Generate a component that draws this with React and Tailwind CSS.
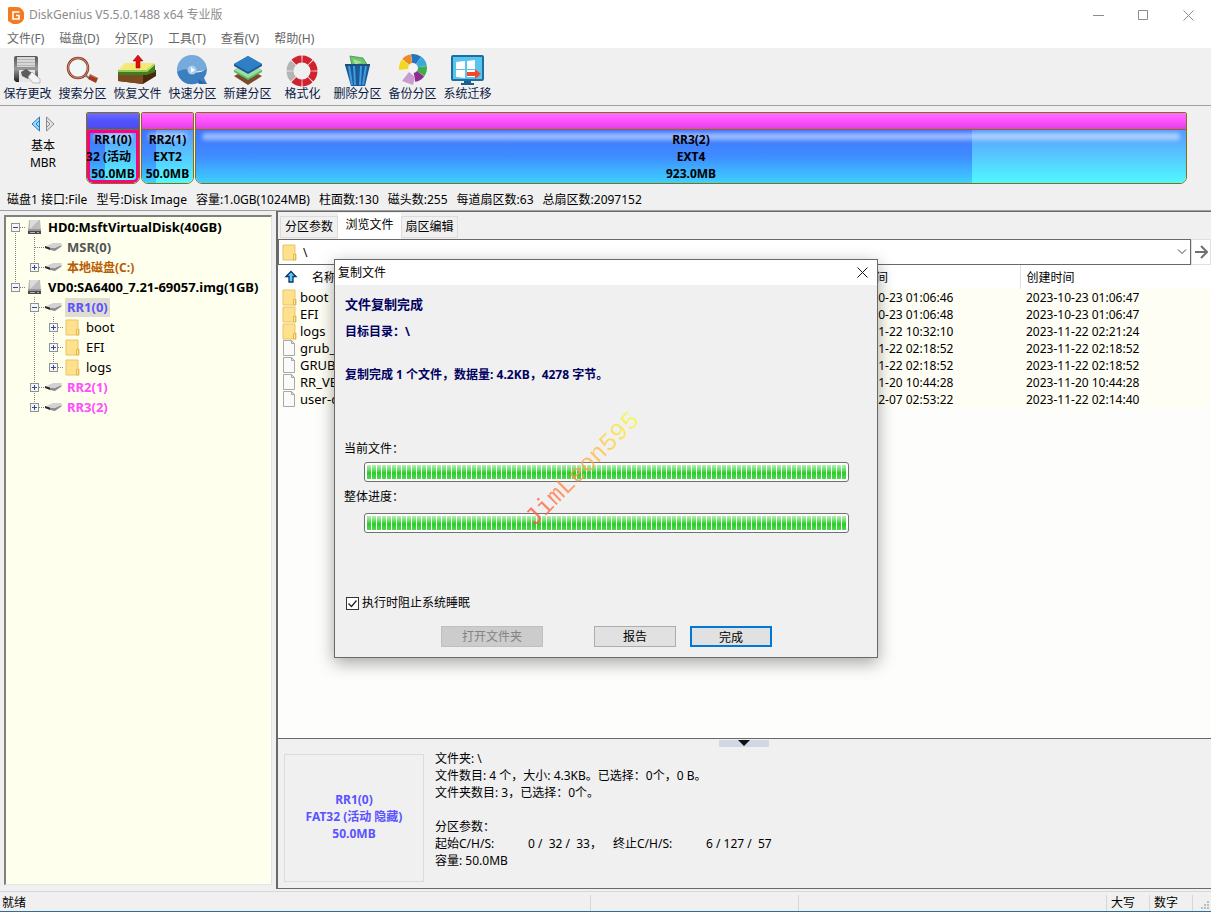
const MENUS = ['文件(F)', '磁盘(D)', '分区(P)', '工具(T)', '查看(V)', '帮助(H)'];

const DISK_INFO = [
  '磁盘1 接口:File',
  '型号:Disk Image',
  '容量:1.0GB(1024MB)',
  '柱面数:130',
  '磁头数:255',
  '每道扇区数:63',
  '总扇区数:2097152',
];

// guides: one entry per indent column. u/d = line above/below, +/- = expander,
// s = stub to the right.
const TREE = [
  { guides: ['-d'], icon: 'disk', label: 'HD0:MsftVirtualDisk(40GB)', cls: 'font-bold text-black' },
  { guides: ['ud', 'uds'], icon: 'part', label: 'MSR(0)', cls: 'font-bold text-[#555555]' },
  { guides: ['ud', '+u'], icon: 'part', label: '本地磁盘(C:)', cls: 'font-bold text-[#b85c00] text-[12px]' },
  { guides: ['-u'], icon: 'disk', label: 'VD0:SA6400_7.21-69057.img(1GB)', cls: 'font-bold text-black' },
  { guides: ['', '-ud'], icon: 'part', label: 'RR1(0)', cls: 'font-bold text-[#5a54ff]', selected: true },
  { guides: ['', 'ud', '+ud'], icon: 'folder', label: 'boot', cls: 'text-black' },
  { guides: ['', 'ud', '+ud'], icon: 'folder', label: 'EFI', cls: 'text-black' },
  { guides: ['', 'ud', '+u'], icon: 'folder', label: 'logs', cls: 'text-black' },
  { guides: ['', '+ud'], icon: 'part', label: 'RR2(1)', cls: 'font-bold text-[#ff4dff]' },
  { guides: ['', '+u'], icon: 'part', label: 'RR3(2)', cls: 'font-bold text-[#ff4dff]' },
];

const FILES = [
  { name: 'boot', dir: true, modified: '2023-10-23 01:06:46', created: '2023-10-23 01:06:47' },
  { name: 'EFI', dir: true, modified: '2023-10-23 01:06:48', created: '2023-10-23 01:06:47' },
  { name: 'logs', dir: true, modified: '2023-11-22 10:32:10', created: '2023-11-22 02:21:24' },
  { name: 'grub_c', modified: '2023-11-22 02:18:52', created: '2023-11-22 02:18:52' },
  { name: 'GRUB', modified: '2023-11-22 02:18:52', created: '2023-11-22 02:18:52' },
  { name: 'RR_VE', modified: '2023-11-20 10:44:28', created: '2023-11-20 10:44:28' },
  { name: 'user-c', modified: '2023-12-07 02:53:22', created: '2023-11-22 02:14:40' },
];

function FolderIcon() {
  return (
    <svg width="15" height="17" viewBox="0 0 15 17" className="flex-none">
      <path d="M1 1h12v9h1v6H1z" fill="#ffe08c" stroke="#e8c566" />
      <path d="M11.5 16V10.5h2V16z" fill="#ffe9ad" stroke="#e0b94e" />
    </svg>
  );
}

function FileIcon() {
  return (
    <svg width="15" height="17" viewBox="0 0 15 17" className="flex-none">
      <path d="M1.5.5h8l3 3v12h-11z" fill="#fafafa" stroke="#a8a8a8" />
      <path d="M9.500.5v3h3z" fill="#e4e4e4" stroke="#a8a8a8" />
    </svg>
  );
}

function DiskIcon() {
  return (
    <svg width="15" height="16" viewBox="0 0 15 16">
      <path d="M2 1h11l1 10H1z" fill="#bdbdbd" />
      <path d="M3 1h9l-9 9z" fill="#dcdcdc" />
      <path d="M1 10h13v2H1z" fill="#9a9a9a" />
      <path d="M1 12h13v3H1z" fill="#4a4a4a" />
      <path d="M3 13.500h5M10 13.500h2" stroke="#b5b5b5" />
    </svg>
  );
}

function PartIcon() {
  return (
    <svg width="17" height="10" viewBox="0 0 17 10">
      <path d="M6 7l10.500-4v1.500L10 9z" fill="#8e8e8e" />
      <path d="M1 4 8 1h8.500v2L9 6.500z" fill="#d2d2d2" />
      <path d="M0 4l5 1.500V8L0 6z" fill="#2c2c2c" />
      <path d="M5 5.500l5 1V9L5 8z" fill="#8c8c8c" />
    </svg>
  );
}

const TREE_ICONS = { disk: <DiskIcon />, part: <PartIcon />, folder: <FolderIcon /> };

function Guide({ spec }) {
  const box = spec[0] === '+' || spec[0] === '-' ? spec[0] : null;
  return (
    <svg width="19" height="20" viewBox="0 0 19 20" className="flex-none" shapeRendering="crispEdges">
      <g stroke="#808080" strokeDasharray="1 1">
        {spec.includes('u') && <path d="M9.500 0v10" />}
        {spec.includes('d') && <path d="M9.500 10v10" />}
        {(box || spec.includes('s')) && <path d="M9.500 10.500H19" />}
      </g>
      {box && (
        <>
          <rect x="5.500" y="6.500" width="8" height="8" fill="#f6f6f6" stroke="#919191" />
          <path d="M7 10.500h5" stroke="#2b4ba0" />
          {box === '+' && <path d="M9.500 8v5" stroke="#2b4ba0" />}
        </>
      )}
    </svg>
  );
}

function wedge(cx, cy, r0, r1, a0, a1) {
  const p = (r, a) => {
    const t = (a * Math.PI) / 180;
    return `${(cx + r * Math.sin(t)).toFixed(2)} ${(cy - r * Math.cos(t)).toFixed(2)}`;
  };
  return `M${p(r0, a0)}L${p(r1, a0)}A${r1} ${r1} 0 0 1 ${p(r1, a1)}L${p(r0, a1)}A${r0} ${r0} 0 0 0 ${p(r0, a0)}`;
}

const SaveIcon = (
  <>
    <defs>
      <linearGradient id="save" x1="0" y1="0" x2="0" y2="1">
        <stop offset="0" stopColor="#555" />
        <stop offset=".5" stopColor="#9a9a9a" />
        <stop offset="1" stopColor="#222" />
      </linearGradient>
    </defs>
    <path d="M2 4q0-2 2-2h20q2 0 2 2v24H4l-2-2z" fill="url(#save)" />
    <path d="M5 3h18v10H5z" fill="#d8d8d8" />
    <path d="M5 5h18v1H5zM5 8h18v1H5zM5 11h18v1H5z" fill="#b4b4b4" />
    <path d="M7 16h16v12H7z" fill="#e6e6e6" />
    <path d="M9 18l5-3 6 4-4 6-6-3z" fill="#5c5c5c" />
    <path d="M16 23l4-5 8 7v4h-7z" fill="#f4f4f4" stroke="#999" strokeWidth=".6" />
  </>
);

const SearchIcon = (
  <>
    <circle cx="11" cy="14" r="10" fill="#f3f6f6" stroke="#8e3b22" strokeWidth="2.500" />
    <circle cx="11" cy="14" r="10" fill="none" stroke="#e0a088" strokeWidth=".8" />
    <path d="M18 21l4 3" stroke="#777" strokeWidth="2" />
    <path d="M23 20l8 4-2 5-8-4z" fill="#a03c22" />
    <path d="M23 21l7 3" stroke="#d9795c" />
  </>
);

const RecoverIcon = (
  <g transform="translate(-4)">
    <path d="M0 16h38v6l-13 8L0 27z" fill="#4a280c" />
    <path d="M0 17l25 4v9L0 27z" fill="#7a4a20" />
    <path d="M7 10h30v8l-8 3H0v-4z" fill="#3f7d1d" />
    <path d="M7 9h30l-8 7H0z" fill="#f3e978" />
    <path d="M0 17h29l8-7" fill="none" stroke="#b7e070" strokeWidth="1.500" />
    <path d="M20 1l5 6h-3v7h-4V7h-3z" fill="#e01010" stroke="#900" strokeWidth=".5" />
  </g>
);

const QuickIcon = (
  <>
    <path d="M15 1a15 15 0 0 1 15 15l-15 2L0 18A15 15 0 0 1 15 1z" fill="#75aadb" />
    <path d="M0 18q8-5 14-1t16-2a15 15 0 0 1-3 9l3 6h-8l-1-1A15 15 0 0 1 0 18z" fill="#3b7fc0" />
    <circle cx="15" cy="16" r="4.500" fill="#a9cdec" />
    <path d="M14 13l4 3-4 3z" fill="#fff" />
    <path d="M21 25l9 5h-8z" fill="#2a6aab" />
  </>
);

const NewIcon = (
  <>
    <path d="M2 22l14-7 14 7-14 9z" fill="#7a4a2a" />
    <path d="M2 16l14-7 14 7v2l-14 8-14-8z" fill="#5fb570" />
    <path d="M2 16l14-7 14 7-14 8z" fill="#9be0a0" />
    <path d="M2 10l14-8 14 8v2l-14 8-14-8z" fill="#1c5590" />
    <path d="M2 10l14-8 14 8-14 8z" fill="#2f7fc6" />
  </>
);

const FormatIcon = (
  <>
    {Array.from({ length: 8 }, (_, i) => (
      <path
        key={i}
        d={wedge(15, 17, 8.5, 15.5, i * 45 + 2, i * 45 + 43)}
        fill={i === 5 || i === 6 ? '#b4b4b4' : '#d1222f'}
      />
    ))}
  </>
);

const DeleteIcon = (
  <>
    <path d="M8 2l13 2 5 8H10z" fill="#6cc46c" stroke="#2f8a3c" strokeWidth=".7" />
    <path d="M11 5l9 3-7 3z" fill="#a5e09c" />
    <path d="M3 11h25l-5 21H9z" fill="#1b5a96" />
    <path d="M7 12l3 19M12 12l1 19M19 12l-1 19M24 12l-3 19" stroke="#3f9ce0" strokeWidth="2" />
    <path d="M3 11h25" stroke="#1d4e80" strokeWidth="2" />
  </>
);

const BackupIcon = (
  <>
    {['#2474c0', '#3aa8dc', '#3fae49', '#8e2d92'].map((c, i) => (
      <path key={c} d={wedge(16, 14, 5, 14, i * 45 - 8, i * 45 + 36)} fill={c} />
    ))}
    <path d={wedge(16, 14, 5, 14, 310, 350)} fill="#ee8a22" />
    <path d={wedge(16, 14, 5, 14, 262, 308)} fill="#f4d820" />
    <path d="M12 18l6 5-2 8-11-4z" fill="#c99bcf" />
    <circle cx="16" cy="14" r="4" fill="#f4f4f4" />
  </>
);

const MigrateIcon = (
  <>
    <rect x="-1" y="1" width="33" height="26" rx="2" fill="#1d6f9f" />
    <rect x="1" y="3" width="29" height="22" fill="#58c5ee" />
    <path d="M4 8l9-1v8H4zM15 7l8-1v9h-8zM4 16h9v8l-9-1zM15 16h8v7h-8z" fill="#fff" />
    <path d="M15 18h8v-3l6 5-6 5v-3h-8z" fill="#f0492c" />
    <path d="M12 27h7v2h3v2H9v-2h3z" fill="#1d5f8c" />
  </>
);

const TOOLS = [
  ['保存更改', SaveIcon],
  ['搜索分区', SearchIcon],
  ['恢复文件', RecoverIcon],
  ['快速分区', QuickIcon],
  ['新建分区', NewIcon],
  ['格式化', FormatIcon],
  ['删除分区', DeleteIcon],
  ['备份分区', BackupIcon],
  ['系统迁移', MigrateIcon],
];

function TitleBar() {
  return (
    <header className="flex h-[30px] flex-none items-center bg-white pl-2 text-[#8c8c8c]">
      <svg width="16" height="17" viewBox="0 0 16 17">
        <path d="M1 0h8a7 8 0 0 1 0 17H5L0 14V1z" fill="#f47b20" />
        <path d="M11.500 5H5v7h6V8.500H8" fill="none" stroke="#fff" strokeWidth="1.600" />
      </svg>
      <span className="ml-[5px] flex-1">DiskGenius V5.5.0.1488 x64 专业版</span>
      <button aria-label="最小化" className="flex h-full w-[45px] items-center justify-center">
        <svg width="11" height="11" stroke="#8c8c8c" fill="none"><path d="M0 5.500h11" /></svg>
      </button>
      <button aria-label="最大化" className="flex h-full w-[45px] items-center justify-center">
        <svg width="11" height="11" stroke="#8c8c8c" fill="none"><path d="M.5.5h9v9h-9z" /></svg>
      </button>
      <button aria-label="关闭" className="flex h-full w-[45px] items-center justify-center">
        <svg width="11" height="11" stroke="#8c8c8c" fill="none"><path d="M.5.5l10 10M10.500.5l-10 10" /></svg>
      </button>
    </header>
  );
}

function Partition({ top, used, cls, selected, lines }) {
  return (
    <div className={`flex flex-col overflow-hidden rounded-t-[2px] rounded-b-[7px] border border-[#857010] ${cls}`}>
      <div className={`h-[17px] flex-none border-b border-[#857010] bg-linear-to-b ${top}`} />
      <div className="relative flex flex-1 flex-col overflow-hidden bg-linear-to-b from-[#5a98ff] to-[#50f8ff] text-center text-[12px] leading-[17px] font-bold text-black">
        <div
          className="absolute inset-y-0 left-0 bg-linear-to-b from-[#3f74ff] via-[#3f8cff] to-[#3fd0ff]"
          style={{ width: used }}
        />
        <div className="absolute inset-x-1.5 top-[3px] h-[7px] rounded-full bg-white/50 blur-[2px]" />
        {selected && <div className="absolute inset-0 rounded-b-[6px] border-[3px] border-[#ff0080]" />}
        <div className="relative flex flex-col items-center pt-px">
          {lines.map((l) => (
            <span key={l} className={l.startsWith('FAT32') ? 'mr-2 self-end whitespace-nowrap' : 'whitespace-nowrap'}>
              {l}
            </span>
          ))}
        </div>
      </div>
    </div>
  );
}

function DiskMap() {
  return (
    <section className="flex h-[83px] flex-none pt-1.5 pr-6">
      <div className="flex w-[86px] flex-none flex-col items-center pt-1 leading-[17px]">
        <div className="mb-[5px] flex gap-1">
          <button aria-label="上一磁盘">
            <svg width="10" height="16" viewBox="0 0 10 16"><path d="M8.500 1v14L1 8z" fill="#9adcff" stroke="#2a78b8" /><path d="M8 5L5 8l3 3" fill="none" stroke="#2a78b8" /></svg>
          </button>
          <button aria-label="下一磁盘">
            <svg width="10" height="16" viewBox="0 0 10 16"><path d="M1.500 1v14L9 8z" fill="#e4e4e4" stroke="#8a8a8a" /><path d="M2 5l3 3-3 3" fill="none" stroke="#8a8a8a" /></svg>
          </button>
        </div>
        <span>基本</span>
        <span>MBR</span>
      </div>
      <div className="flex h-[72px] flex-1 gap-px">
        <Partition
          cls="w-[54px] flex-none"
          top="from-[#6c6cff] via-[#5252ff] to-[#4c4ce8]"
          used="34%"
          selected
          lines={['RR1(0)', 'FAT32 (活动', '50.0MB']}
        />
        <Partition
          cls="w-[53px] flex-none"
          top="from-[#ff6cff] via-[#ff50ff] to-[#e040e0]"
          used="28%"
          lines={['RR2(1)', 'EXT2', '50.0MB']}
        />
        <Partition
          cls="flex-1"
          top="from-[#ff6cff] via-[#ff50ff] to-[#e040e0]"
          used="78.4%"
          lines={['RR3(2)', 'EXT4', '923.0MB']}
        />
      </div>
    </section>
  );
}

function DiskTree() {
  return (
    <aside className="m-1 w-[268px] flex-none border border-t-2 border-l-2 border-[#e3e3e3] border-t-[#808080] border-l-[#808080] bg-[#ffffee]">
      <ul>
        {TREE.map((n) => (
          <li key={n.label} className="flex h-5 items-center text-[13px]">
            {n.guides.map((g, i) => <Guide key={i} spec={g} />)}
            <span className="flex w-[19px] flex-none justify-center">{TREE_ICONS[n.icon]}</span>
            <span className={`ml-0.5 px-0.5 leading-[19px] ${n.cls} ${n.selected ? 'bg-[#e0dccf]' : ''}`}>{n.label}</span>
          </li>
        ))}
      </ul>
    </aside>
  );
}

function FileTable() {
  return (
    <div className="min-h-0 flex-1 bg-[#fdfdfb]">
      <table className="w-full table-fixed border-collapse text-left leading-[17px]">
        <colgroup>
          <col className="w-[556px]" />
          <col className="w-[186px]" />
          <col />
        </colgroup>
        <thead>
          <tr className="h-6 bg-white">
            <th className="font-normal">
              <span className="flex items-center gap-3.5 pl-1.5">
                <svg width="14" height="14" viewBox="0 0 14 14">
                  <path d="M7 1.500l5 5H9V12H5V6.500H2z" fill="#59c8ff" stroke="#0a3560" strokeWidth="1.300" />
                </svg>
                名称
              </span>
            </th>
            <th className="border-r border-[#e0e0e0] pl-1.5 font-normal">修改时间</th>
            <th className="pl-1.5 font-normal">创建时间</th>
          </tr>
        </thead>
        <tbody className="bg-[#fffef5]">
          {FILES.map((f) => (
            <tr key={f.name} className="h-[17px]">
              <td className="p-0">
                <span className="flex h-[17px] items-center gap-[3px] pl-1 text-[13px]">
                  {f.dir ? <FolderIcon /> : <FileIcon />}
                  {f.name}
                </span>
              </td>
              <td className="py-0 pl-1.5">{f.modified}</td>
              <td className="py-0 pl-1.5">{f.created}</td>
            </tr>
          ))}
        </tbody>
      </table>
    </div>
  );
}

function DetailPane() {
  return (
    <div className="flex h-[151px] flex-none border-y border-[#696969] pl-1.5">
      <div className="mt-[15px] mb-1.5 flex w-[140px] flex-none flex-col items-center justify-center border border-[#dcdcdc] pb-1 leading-[17px] font-bold text-[#5a54ff]">
        <span>RR1(0)</span>
        <span>FAT32 (活动 隐藏)</span>
        <span>50.0MB</span>
      </div>
      <div className="mt-[11px] ml-[11px] leading-[17px] whitespace-pre">
        <p>文件夹: \</p>
        <p>文件数目: 4 个，大小: 4.3KB。已选择：0个，0 B。</p>
        <p>文件夹数目: 3，已选择：0个。</p>
        <p> </p>
        <p>分区参数：</p>
        <p className="flex">
          <span className="w-[93px]">起始C/H/S:</span>
          <span className="w-[85px]">0 /  32 /  33，</span>
          <span className="w-[93px]">终止C/H/S:</span>
          <span>6 / 127 /  57</span>
        </p>
        <p>容量: 50.0MB</p>
      </div>
    </div>
  );
}

function Browser() {
  return (
    <main className="flex min-w-0 flex-1 flex-col border-t border-l-2 border-[#696969]">
      <div role="tablist" className="flex h-[27px] flex-none items-end pl-0.5">
        <button role="tab" className="mb-px h-[22px] w-[58px] border border-[#dcdcdc]">分区参数</button>
        <button role="tab" aria-selected="true" className="h-[26px] w-[63px] bg-white pb-0.5">浏览文件</button>
        <button role="tab" className="mb-px h-[22px] w-[57px] border border-[#dcdcdc]">扇区编辑</button>
      </div>
      <div className="flex h-[26px] flex-none bg-white">
        <div className="flex flex-1 items-center border border-[#696969] pl-[3px]">
          <FolderIcon />
          <input aria-label="路径" defaultValue="\" className="ml-1.5 h-5 flex-1 outline-none" />
          <button aria-label="展开路径" className="flex w-4 justify-center">
            <svg width="10" height="6" fill="none" stroke="#444"><path d="M1 .5l4 4 4-4" /></svg>
          </button>
        </div>
        <button aria-label="转到" className="flex w-5 items-center justify-center border border-[#e0e0e0]">
          <svg width="14" height="14" fill="none" stroke="#707070" strokeWidth="2"><path d="M1 7h11M7 1l6 6-6 6" /></svg>
        </button>
      </div>
      <FileTable />
      <div className="relative">
        <DetailPane />
        <button aria-label="折叠" className="absolute top-0.5 left-[441px] flex h-[7px] w-[50px] justify-center bg-[#cfd8e3]">
          <svg width="12" height="6"><path d="M0 0h12L6 6z" fill="#111" /></svg>
        </button>
      </div>
    </main>
  );
}

function Progress({ label }) {
  return (
    <div
      role="progressbar"
      aria-label={label}
      aria-valuenow={100}
      className="mr-7 ml-[29px] h-5 rounded-[3px] border border-[#707070] bg-white p-0.5"
    >
      <div className="h-full bg-linear-to-b from-[#b4efb4] via-[#22cf22] via-55% to-[#4fd84f]">
        <div className="h-full bg-[repeating-linear-gradient(to_right,transparent_0_4px,white_4px_5px)]" />
      </div>
    </div>
  );
}

function CopyDialog() {
  return (
    <div
      role="dialog"
      aria-label="复制文件"
      className="absolute top-[259px] left-[334px] w-[544px] border border-[#696969] bg-[#f0f0f0] shadow-[0_5px_16px_rgba(0,0,0,0.35)]"
    >
      <div className="flex h-[25px] items-center bg-white pl-[3px]">
        <span className="flex-1">复制文件</span>
        <button aria-label="关闭对话框" className="flex w-[30px] justify-center">
          <svg width="11" height="11" stroke="#111" fill="none"><path d="M.5.5l10 10M10.500.5l-10 10" /></svg>
        </button>
      </div>
      <div className="h-[372px] leading-5">
        <div className="pt-[9px] pl-[10px] font-bold text-[#000060]">
          <p className="text-[13px]">文件复制完成</p>
          <p className="mt-2">目标目录：\</p>
          <p className="mt-[23px]">复制完成 1 个文件，数据量: 4.2KB，4278 字节。</p>
        </div>
        <p className="mt-[54px] mb-[3px] pl-[9px]">当前文件：</p>
        <Progress label="当前文件" />
        <p className="mt-[5px] mb-1.5 pl-[9px]">整体进度：</p>
        <Progress label="整体进度" />
        <label className="mt-[60px] ml-[11px] flex w-fit items-center gap-[3px]">
          <span className="relative h-[13px]">
            <input type="checkbox" defaultChecked className="peer block h-[13px] w-[13px] appearance-none border border-[#333] bg-white" />
            <svg width="13" height="13" className="pointer-events-none absolute inset-0 hidden peer-checked:block" fill="none" stroke="#222" strokeWidth="1.300">
              <path d="M2.500 6.500l3 3 5-6" />
            </svg>
          </span>
          执行时阻止系统睡眠
        </label>
        <div className="mt-[13px] flex pl-[106px]">
          <button disabled className="h-[21px] w-[102px] border border-[#bfbfbf] bg-[#cccccc] text-[#838383]">打开文件夹</button>
          <button className="ml-[51px] h-[21px] w-[82px] border border-[#adadad] bg-[#e1e1e1]">报告</button>
          <button className="ml-3.5 h-[21px] w-[82px] border-2 border-[#0078d7] bg-[#e1e1e1]">完成</button>
        </div>
      </div>
    </div>
  );
}

function StatusBar() {
  return (
    <footer className="flex h-[21px] flex-none items-center border-t border-b border-t-[#d7d7d7] border-b-[#2c6f92] pt-0.5">
      <span className="w-[590px] flex-none pl-0.5">就绪</span>
      <span className="h-4 w-[208px] flex-none border-l border-[#d7d7d7]" />
      <span className="h-4 flex-1 border-l border-[#d7d7d7]" />
      <span className="h-4 w-[43px] border-l border-[#d7d7d7] pl-1 leading-4">大写</span>
      <span className="h-4 w-[43px] border-l border-[#d7d7d7] pl-1 leading-4">数字</span>
      <span className="flex h-4 w-[19px] items-end justify-end border-l border-[#d7d7d7]">
        <svg width="10" height="10" fill="#bdbdbd"><path d="M6 0h2v2H6zM3 3h2v2H3zM6 3h2v2H6zM0 6h2v2H0zM3 6h2v2H3zM6 6h2v2H6z" /></svg>
      </span>
    </footer>
  );
}

export default function App() {
  return (
    <div className="relative flex h-screen flex-col overflow-hidden bg-[#f0f0f0] font-['Noto_Sans','Noto_Sans_CJK_SC',sans-serif] text-[12px] text-black">
      <TitleBar />
      <nav className="flex h-[18px] flex-none items-center gap-px bg-white text-[#666666]">
        {MENUS.map((m) => (
          <button key={m} className="px-[7px] leading-5">{m}</button>
        ))}
      </nav>
      <div className="flex h-[58px] flex-none border-b border-[#a0a0a0] pt-1.5">
        {TOOLS.map(([label, icon]) => (
          <button key={label} className="flex w-[55px] flex-col items-center leading-[15px] text-[#0c1a44]">
            <svg width="32" height="32" viewBox="0 0 32 32" className="overflow-visible">{icon}</svg>
            {label}
          </button>
        ))}
      </div>
      <DiskMap />
      <div className="flex h-[22px] flex-none items-center gap-[9px] border-b border-[#a0a0a0] pl-[7px]">
        {DISK_INFO.map((t) => (
          <span key={t} className="whitespace-nowrap">{t}</span>
        ))}
      </div>
      <div className="flex min-h-0 flex-1 pb-0.5">
        <DiskTree />
        <Browser />
      </div>
      <StatusBar />
      <CopyDialog />
      <div className="pointer-events-none absolute top-[456px] left-[508px] -rotate-45 bg-linear-to-r from-[#ff4a4a] via-[#ffa04a] to-[#f4ff30] bg-clip-text font-['Liberation_Mono',monospace] text-[25px] leading-[28px] text-transparent opacity-80">
        JimLeon595
      </div>
    </div>
  );
}
